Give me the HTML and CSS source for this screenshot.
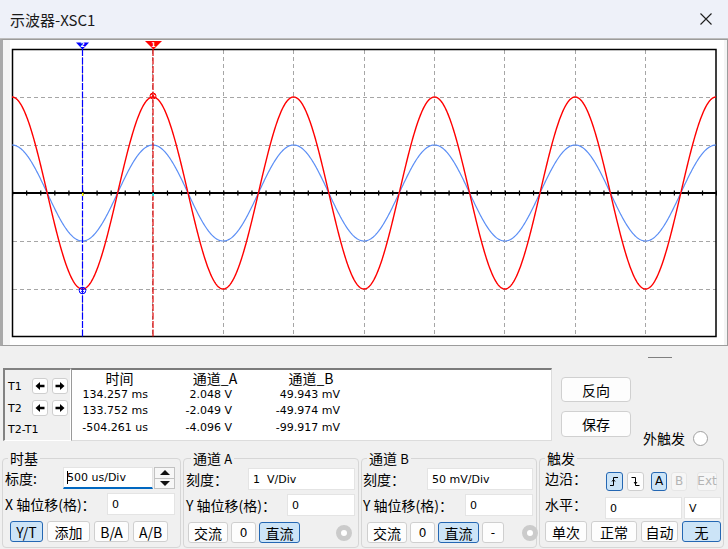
FILE: index.html
```html
<!DOCTYPE html>
<html lang="zh-CN">
<head>
    <meta charset="UTF-8">
    <title>示波器-XSC1</title>
    <link rel="stylesheet" href="styles.css">
</head>
<body>
    <!-- barra de título -->
    <div class="titlebar">
        <span class="title">示波器-XSC1</span>
        <svg class="close" width="14" height="14" viewBox="0 0 14 14"><path d="M1.5 1.5 L12.5 12.5 M12.5 1.5 L1.5 12.5" stroke="#1e1e1e" stroke-width="1.1"/></svg>
    </div>

    <!-- tela do osciloscópio -->
    <div class="screen">
        <svg class="scope" width="714" height="305" viewBox="10 40 714 305">
            <rect x="10" y="40" width="714" height="305" fill="#fff"/>
            <g stroke="#a6a6a6" stroke-width="1" stroke-dasharray="4 3">
                <line x1="82.5" y1="50" x2="82.5" y2="336"/>
                <line x1="152.5" y1="50" x2="152.5" y2="336"/>
                <line x1="223.5" y1="50" x2="223.5" y2="336"/>
                <line x1="293.5" y1="50" x2="293.5" y2="336"/>
                <line x1="364.5" y1="50" x2="364.5" y2="336"/>
                <line x1="434.5" y1="50" x2="434.5" y2="336"/>
                <line x1="504.5" y1="50" x2="504.5" y2="336"/>
                <line x1="575.5" y1="50" x2="575.5" y2="336"/>
                <line x1="645.5" y1="50" x2="645.5" y2="336"/>
                <line x1="13" y1="97.5" x2="716" y2="97.5"/>
                <line x1="13" y1="145.5" x2="716" y2="145.5"/>
                <line x1="13" y1="241.5" x2="716" y2="241.5"/>
                <line x1="13" y1="289.5" x2="716" y2="289.5"/>
            </g>
            <line x1="12" y1="193" x2="716" y2="193" stroke="#000" stroke-width="2"/>
            <line x1="12" y1="193" x2="717" y2="193" stroke="#000" stroke-width="5" stroke-dasharray="1.2 12.88"/>
            <rect x="12.5" y="49.5" width="703.5" height="287" fill="none" stroke="#000" stroke-width="1.5"/>

            <polyline id="wave-b" fill="none" stroke="#5b8ef5" stroke-width="1.2"/>
            <polyline id="wave-a" fill="none" stroke="#ff0000" stroke-width="1.4"/>

            <line x1="82.5" y1="49" x2="82.5" y2="337" stroke="#0000ff" stroke-width="1.2" stroke-dasharray="7 1.5"/>
            <line x1="153" y1="49" x2="153" y2="337" stroke="#e00000" stroke-width="1.2" stroke-dasharray="7 1.5"/>
            <rect x="82" y="193" width="1.5" height="3" fill="#ffff00"/>
            <rect x="152.4" y="193" width="1.5" height="3" fill="#00ffff"/>

            <polygon points="76,42.5 89,42.5 82.5,49.5" fill="#0000ff"/>
            <text x="82.5" y="47.4" class="mark">2</text>
            <polygon points="145,41 162,41 153.5,49.5" fill="#ff0000"/>
            <text x="153.5" y="47.2" class="mark">1</text>

            <circle cx="153" cy="96" r="3" fill="none" stroke="#ff0000"/>
            <path d="M151 94 L155 98 M155 94 L151 98" stroke="#ff0000" stroke-width="0.8"/>
            <circle cx="82.5" cy="290.5" r="3.3" fill="none" stroke="#0000ff"/>
            <path d="M80.5 288.5 L84.5 292.5 M84.5 288.5 L80.5 292.5" stroke="#0000ff" stroke-width="0.8"/>
        </svg>
    </div>

    <div class="splitter"><span class="grip"></span></div>

    <!-- cursores -->
    <div class="cursor-row">
        <div class="keys">
            <div class="key-row">
                <span class="key-label">T1</span>
                <span class="arrow"><svg width="10" height="10" viewBox="0 0 10 10"><path d="M0.5 5 L5 1 V3.7 H9.5 V6.3 H5 V9 Z"/></svg></span>
                <span class="arrow"><svg width="10" height="10" viewBox="0 0 10 10"><path d="M9.5 5 L5 1 V3.7 H0.5 V6.3 H5 V9 Z"/></svg></span>
            </div>
            <div class="key-row">
                <span class="key-label">T2</span>
                <span class="arrow"><svg width="10" height="10" viewBox="0 0 10 10"><path d="M0.5 5 L5 1 V3.7 H9.5 V6.3 H5 V9 Z"/></svg></span>
                <span class="arrow"><svg width="10" height="10" viewBox="0 0 10 10"><path d="M9.5 5 L5 1 V3.7 H0.5 V6.3 H5 V9 Z"/></svg></span>
            </div>
            <div class="key-row delta"><span class="key-label">T2-T1</span></div>
        </div>

        <div class="readout">
            <div class="readout-head">
                <span>时间</span><span>通道_A</span><span>通道_B</span>
            </div>
            <div class="readout-row">
                <span>134.257 ms</span><span>2.048 V</span><span>49.943 mV</span>
            </div>
            <div class="readout-row">
                <span>133.752 ms</span><span>-2.049 V</span><span>-49.974 mV</span>
            </div>
            <div class="readout-row">
                <span>-504.261 us</span><span>-4.096 V</span><span>-99.917 mV</span>
            </div>
        </div>

        <div class="side">
            <div class="btn-wide">反向</div>
            <div class="btn-wide tall">保存</div>
        </div>

        <div class="ext">
            <span>外触发</span>
            <span class="radio"></span>
        </div>
    </div>

    <!-- controles -->
    <div class="groups">
        <fieldset class="timebase">
            <legend>时基</legend>
            <div class="row row1">
                <span class="lbl">标度:</span>
                <div class="field focus"><span class="caret"></span>500 us/Div</div>
                <div class="spin"><span class="spin-up"></span><span class="spin-down"></span></div>
            </div>
            <div class="row row2">
                <span class="lbl">X 轴位移(格)：</span>
                <div class="field">0</div>
            </div>
            <div class="row row3">
                <div class="btn on">Y/T</div>
                <div class="btn">添加</div>
                <div class="btn">B/A</div>
                <div class="btn">A/B</div>
            </div>
        </fieldset>

        <fieldset class="chan-a">
            <legend>通道 <small>A</small></legend>
            <div class="row row1">
                <span class="lbl">刻度：</span>
                <div class="field">1&nbsp;&nbsp;V/Div</div>
            </div>
            <div class="row row2">
                <span class="lbl">Y 轴位移(格)：</span>
                <div class="field">0</div>
            </div>
            <div class="row row3">
                <div class="btn">交流</div>
                <div class="btn zero">0</div>
                <div class="btn on">直流</div>
                <span class="knob"></span>
            </div>
        </fieldset>

        <fieldset class="chan-b">
            <legend>通道 <small>B</small></legend>
            <div class="row row1">
                <span class="lbl">刻度：</span>
                <div class="field">50 mV/Div</div>
            </div>
            <div class="row row2">
                <span class="lbl">Y 轴位移(格)：</span>
                <div class="field">0</div>
            </div>
            <div class="row row3">
                <div class="btn">交流</div>
                <div class="btn zero">0</div>
                <div class="btn on">直流</div>
                <div class="btn minus">-</div>
                <span class="knob"></span>
            </div>
        </fieldset>

        <fieldset class="trigger">
            <legend>触发</legend>
            <div class="row row1">
                <span class="lbl">边沿：</span>
                <div class="btn edge on"><svg width="11" height="11" viewBox="0 0 11 11"><path d="M1 9.5 H4.5 V1.5 H9 M3 5.5 L4.5 3.5 L6 5.5" fill="none" stroke="#000"/></svg></div>
                <div class="btn edge"><svg width="11" height="11" viewBox="0 0 11 11"><path d="M1.5 1.5 H5.5 V9.5 H9.5 M4 6 L5.5 8 L7 6" fill="none" stroke="#000"/></svg></div>
                <div class="btn src on">A</div>
                <div class="btn src off">B</div>
                <div class="btn src ext-src off">Ext</div>
            </div>
            <div class="row row2">
                <span class="lbl">水平：</span>
                <div class="field level">0</div>
                <div class="field unit">V</div>
            </div>
            <div class="row row3">
                <div class="btn">单次</div>
                <div class="btn">正常</div>
                <div class="btn">自动</div>
                <div class="btn on">无</div>
            </div>
        </fieldset>
    </div>

    <script src="script.js"></script>
</body>
</html>
```

FILE: styles.css
```css
* {
    box-sizing: border-box;
}

body {
    margin: 0;
    width: 728px;
    height: 549px;
    overflow: hidden;
    background: #f0f0f0;
    font-family: "Noto Sans CJK SC", sans-serif;
    font-size: 14px;
    color: #000;
}

/* barra de título */
.titlebar {
    height: 39px;
    background: #eef1f9;
    border-bottom: 1px solid #bdbdbd;
    display: flex;
    align-items: center;
    justify-content: space-between;
    padding: 0 15px 0 10px;
}

.title {
    font-size: 15px;
    color: #1a1a1a;
}

/* tela */
.screen {
    height: 307px;
    border: 1px solid #9c9c9c;
    border-left: 3px solid #a8a8a8;
    padding: 0 3px 0 7px;
    background: #f4f4f4;
}

.scope {
    display: block;
}

.mark {
    font-family: "DejaVu Sans", sans-serif;
    font-size: 6.5px;
    font-weight: bold;
    fill: #fff;
    text-anchor: middle;
}

.splitter {
    height: 22px;
    display: flex;
    justify-content: flex-end;
    align-items: center;
    padding-right: 56px;
}

.grip {
    width: 24px;
    height: 1px;
    background: #808080;
}

/* cursores */
.cursor-row {
    display: flex;
    height: 73px;
    padding-left: 3px;
}

.keys {
    width: 68px;
    border-top: 2px solid #828282;
    border-left: 2px solid #828282;
    border-right: 1px solid #fff;
    border-bottom: 1px solid #fff;
    padding: 8px 0 0 3px;
}

.key-row {
    display: flex;
    align-items: center;
    height: 16px;
}

.key-row + .key-row {
    margin-top: 6px;
}

.key-row.delta {
    margin-top: 5px;
}

.key-label {
    width: 24px;
    font-family: "DejaVu Sans", sans-serif;
    font-size: 11px;
    white-space: nowrap;
}

.delta .key-label {
    width: auto;
}

.arrow {
    width: 16px;
    height: 16px;
    border: 1px solid #cfcfcf;
    border-radius: 3px;
    background: #fff;
    display: flex;
    align-items: center;
    justify-content: center;
}

.arrow + .arrow {
    margin-left: 4px;
}

.readout {
    width: 481px;
    background: #fff;
    border-top: 2px solid #7b7b7b;
    border-left: 1px solid #9a9a9a;
    border-right: 1px solid #dcdcdc;
    border-bottom: 1px solid #dcdcdc;
}

.readout-head {
    display: grid;
    grid-template-columns: 95px 96px 96px;
    text-align: center;
    line-height: 16.5px;
    font-size: 14px;
}

.readout-row {
    display: grid;
    grid-template-columns: 76px 84px 108px;
    text-align: right;
    line-height: 16.5px;
    font-family: "DejaVu Sans", sans-serif;
    font-size: 11px;
}

.side {
    margin-left: 9px;
    width: 70px;
    display: flex;
    flex-direction: column;
    padding-top: 9px;
    gap: 9px;
}

.btn-wide {
    height: 25px;
    border: 1px solid #d0d0d0;
    border-radius: 4px;
    background: #fdfdfd;
    display: flex;
    align-items: center;
    justify-content: center;
}

.btn-wide.tall {
    height: 26px;
}

.ext {
    margin-left: 12px;
    margin-top: 61px;
    height: 18px;
    display: flex;
    align-items: center;
    gap: 8px;
}

.radio {
    width: 15px;
    height: 15px;
    border-radius: 50%;
    border: 1px solid #a0a0a0;
    background: #fff;
}

/* grupos de controle */
.groups {
    display: flex;
    gap: 2px;
    padding-left: 2px;
    margin-top: 9px;
}

fieldset {
    margin: 0;
    min-width: 0;
    border: 1px solid #d6d6d6;
    border-radius: 4px;
    padding: 0 0 4px 2px;
}

legend {
    padding: 0 2px;
    line-height: 16px;
    font-size: 14px;
}

legend small {
    font-size: 13px;
}

.timebase { width: 179px; }
.timebase legend { margin-left: 3px; }
.chan-a { width: 176px; }
.chan-a legend { margin-left: 5px; }
.chan-b { width: 176px; padding-left: 1px; }
.chan-b legend { margin-left: 4px; }
.trigger { width: 185px; padding-left: 5px; }
.trigger legend { margin-left: 0; }

.row {
    display: flex;
    align-items: center;
    height: 22px;
}

.row1 { margin-top: 1px; }
.row2 { margin-top: 4px; }
.row3 { margin-top: 6px; height: 21px; gap: 3px; }

.lbl {
    flex: none;
    white-space: nowrap;
    line-height: 22px;
}

.field {
    height: 22px;
    background: #fff;
    border: 1px solid #e4e4e4;
    padding-left: 4px;
    display: flex;
    align-items: center;
    font-family: "DejaVu Sans", sans-serif;
    font-size: 11px;
    white-space: pre;
}

.field.focus {
    border-bottom: 2px solid #0067c0;
    padding-left: 3px;
}

.caret {
    width: 1px;
    height: 13px;
    background: #000;
    margin-right: -1px;
}

.spin {
    width: 21px;
    height: 22px;
    margin-left: 1px;
    display: flex;
    flex-direction: column;
    border: 1px solid #c2c2c2;
    background: #f7f7f7;
}

.spin-up,
.spin-down {
    flex: 1;
    display: flex;
    align-items: center;
    justify-content: center;
}

.spin-up {
    border-bottom: 1px solid #c2c2c2;
}

.spin-up::after {
    content: '';
    border-left: 5px solid transparent;
    border-right: 5px solid transparent;
    border-bottom: 5px solid #111;
}

.spin-down::after {
    content: '';
    border-left: 5px solid transparent;
    border-right: 5px solid transparent;
    border-top: 5px solid #111;
}

.timebase .row1 .lbl { width: 58px; }
.timebase .row1 .field { width: 90px; }
.timebase .row2 .lbl { width: 102px; }
.timebase .row2 .field { width: 68px; }
.timebase .row3 { padding-left: 5px; gap: 4px; }

.chan-a .row1 .lbl { width: 62px; }
.chan-a .row1 .field { width: 107px; }
.chan-a .row2 .lbl { width: 101px; }
.chan-a .row2 .field { width: 68px; }
.chan-a .row3 { padding-left: 2px; }
.chan-a .knob { margin-left: 33px; }

.chan-b .row1 .lbl { width: 64px; }
.chan-b .row1 .field { width: 106px; }
.chan-b .row2 .lbl { width: 102px; }
.chan-b .row2 .field { width: 68px; }
.chan-b .row3 { padding-left: 4px; }
.chan-b .knob { margin-left: 15px; }

.trigger .row1 .lbl { width: 61px; }
.trigger .row2 .lbl { width: 60px; }
.trigger .row3 { gap: 4px; }

.btn {
    height: 21px;
    padding: 0;
    border: 1px solid #cfcfcf;
    border-radius: 3px;
    background: #fdfdfd;
    display: flex;
    align-items: center;
    justify-content: center;
    line-height: 1;
    white-space: nowrap;
    flex: none;
}

.btn.on {
    background: #cce4f7;
    border-color: #2467b3;
}

.timebase .btn:nth-child(1) { width: 33px; }
.timebase .btn:nth-child(2) { width: 43px; }
.timebase .btn:nth-child(3) { width: 35px; }
.timebase .btn:nth-child(4) { width: 35px; }

.chan-a .btn, .chan-b .btn { width: 40px; }
.chan-a .btn.on, .chan-b .btn.on { width: 41px; }
.btn.zero { width: 25px !important; font-family: "DejaVu Sans", sans-serif; font-size: 12px; }
.btn.minus { width: 22px !important; font-family: "DejaVu Sans", sans-serif; font-size: 12px; }

.knob {
    width: 16px;
    height: 16px;
    border-radius: 50%;
    border: 5px solid #cbcbcb;
    background: #fff;
    flex: none;
}

.trigger .row1 .btn {
    height: 19px;
    margin-top: 6px;
    font-family: "DejaVu Sans", sans-serif;
    font-size: 12px;
}

.btn.edge { width: 17px; }
.btn.edge + .btn.edge { margin-left: 4px; }
.btn.src { width: 16px; margin-left: 4px; }
.btn.edge + .btn.src { margin-left: 7px; }
.btn.ext-src { width: 20px; margin-left: 10px; }

.btn.off {
    color: #b4b4b4;
    background: #f6f6f6;
    border-color: #e6e6e6;
}

.trigger .row2 .field {
    margin-top: 8px;
}

.field.level { width: 77px; }
.field.unit { width: 37px; margin-left: 2px; }

.trigger .row3 .btn:nth-child(1) { width: 42px; }
.trigger .row3 .btn:nth-child(2) { width: 46px; }
.trigger .row3 .btn:nth-child(3) { width: 37px; }
.trigger .row3 .btn:nth-child(4) { width: 39px; }
```

FILE: script.js
```js
// desenha as duas senoides (período de 2 divisões)
function wave(amp) {
    var pts = [];
    for (var x = 12; x <= 716; x += 0.5) {
        var y = 193 - amp * Math.cos(2 * Math.PI * (x - 12) / 140.8);
        pts.push(x + ',' + y.toFixed(2));
    }
    return pts.join(' ');
}

document.getElementById('wave-a').setAttribute('points', wave(96));
document.getElementById('wave-b').setAttribute('points', wave(48));
```
